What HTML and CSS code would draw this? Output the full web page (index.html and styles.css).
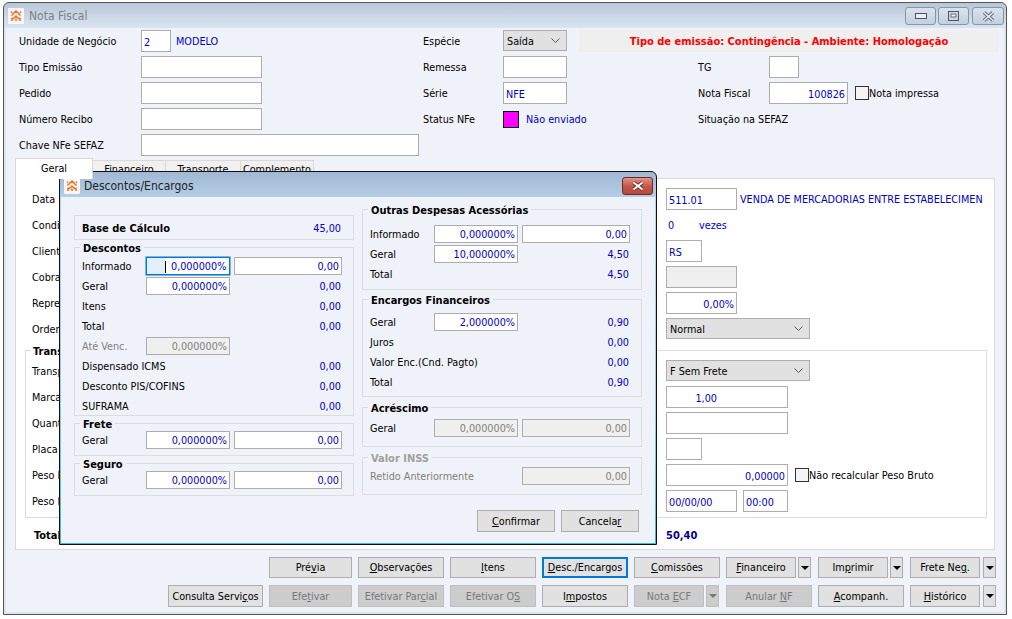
FILE: index.html
```html
<!DOCTYPE html>
<html lang="pt-BR">
<head>
<meta charset="utf-8">
<title>Nota Fiscal</title>
<link rel="stylesheet" href="styles.css">
</head>
<body>
<svg class="defs" width="0" height="0" aria-hidden="true">
  <symbol id="logo" viewBox="0 0 16 16">
    <rect width="16" height="16" rx="1" fill="#f7f7f7"/>
    <path d="M3.5 7.5 8 3l4.5 4.5M5 11l3-3 3 3M4 9.5V13M12 9.5V13M8 10.5V13M3.5 5V3.5M12.5 5V3.5" fill="none" stroke="#f26a1b" stroke-width="1.5"/>
  </symbol>
  <symbol id="chev" viewBox="0 0 9 5">
    <path d="M.5.5 4.5 4.5 8.5.5" fill="none" stroke="#555" stroke-width="1"/>
  </symbol>
</svg>

<main class="window">
  <header class="titlebar main-title">
    <svg class="logo"><use href="#logo"/></svg>
    <span class="title title-inactive">Nota Fiscal</span>
    <div class="caption">
      <div class="cap-btn"><svg width="12" height="6"><rect x=".5" y=".5" width="11" height="5" fill="#e9eef4" stroke="#4c5560"/></svg></div>
      <div class="cap-btn"><svg width="11" height="10"><rect x=".5" y=".5" width="10" height="9" fill="none" stroke="#4c5560"/><rect x="3" y="3" width="5" height="3" fill="#e9eef4" stroke="#4c5560" stroke-width=".8"/></svg></div>
      <div class="cap-btn cap-close"><svg width="13" height="11"><path d="M2 1.5 11 9.5M11 1.5 2 9.5" stroke="#5a6672" stroke-width="3.4"/><path d="M2 1.5 11 9.5M11 1.5 2 9.5" stroke="#eef2f6" stroke-width="1.6"/></svg></div>
    </div>
  </header>

  <div class="client">
    <section class="top-form">
      <div class="lbl">Unidade de Negócio</div>
      <div class="inline"><div class="field w30">2</div><span class="link">MODELO</span></div>
      <div class="lbl">Espécie</div>
      <div class="select w64">Saída<svg class="chev"><use href="#chev"/></svg></div>
      <div class="banner">Tipo de emissão: Contingência - Ambiente: Homologação</div>

      <div class="lbl">Tipo Emissão</div>
      <div class="field w121"></div>
      <div class="lbl">Remessa</div>
      <div class="field w64"></div>
      <div></div>
      <div class="lbl">TG</div>
      <div class="field w30"></div>

      <div class="lbl">Pedido</div>
      <div class="field w121"></div>
      <div class="lbl">Série</div>
      <div class="field w64">NFE</div>
      <div></div>
      <div class="lbl">Nota Fiscal</div>
      <div class="inline"><div class="field w79 right">100826</div><span class="check check-first"></span><span>Nota impressa</span></div>

      <div class="lbl">Número Recibo</div>
      <div class="field w121"></div>
      <div class="lbl">Status NFe</div>
      <div class="inline"><span class="swatch"></span><span class="link status">Não enviado</span></div>
      <div></div>
      <div class="lbl">Situação na SEFAZ</div>
      <div></div>

      <div class="lbl">Chave NFe SEFAZ</div>
      <div class="field w278"></div>
    </section>

    <nav class="tabs">
      <div class="tab tab-on">Geral</div>
      <div class="tab w73">Financeiro</div>
      <div class="tab w75">Transporte</div>
      <div class="tab w73">Complemento</div>
    </nav>

    <section class="panel">
      <div class="rows upper">
        <div class="lbl">Data Emissão</div>
        <div class="inline"><div class="field w71">511.01</div><span class="link cfop">VENDA DE MERCADORIAS ENTRE ESTABELECIMEN</span></div>
        <div class="lbl">Condição Pagto</div>
        <div class="inline"><span class="link times">0</span><span class="link">vezes</span></div>
        <div class="lbl">Cliente</div>
        <div class="field w36">RS</div>
        <div class="lbl">Cobrança</div>
        <div class="field w71 off"></div>
        <div class="lbl">Representante</div>
        <div class="field w71 right">0,00%</div>
        <div class="lbl">Ordem</div>
        <div class="select w144">Normal<svg class="chev"><use href="#chev"/></svg></div>
      </div>

      <div class="transport">
        <div class="legend legend-white">Transporte</div>
        <div class="rows">
          <div class="lbl">Transportadora</div>
          <div class="select w144">F Sem Frete<svg class="chev"><use href="#chev"/></svg></div>
          <div class="lbl">Marca</div>
          <div class="field w122 right qty">1,00</div>
          <div class="lbl">Quantidade</div>
          <div class="field w122"></div>
          <div class="lbl">Placa</div>
          <div class="field w36"></div>
          <div class="lbl">Peso Bruto</div>
          <div class="inline"><div class="field w122 right">0,00000</div><span class="check check-second"></span><span>Não recalcular Peso Bruto</span></div>
          <div class="lbl">Peso Líquido</div>
          <div class="inline dates"><div class="field w71">00/00/00</div><div class="field w45">00:00</div></div>
        </div>
      </div>

      <div class="total-row"><b>Total</b><b class="total-val">50,40</b></div>
    </section>

    <section class="actions">
      <div class="act-row act-a">
        <div class="btn w83"><span>Pré<u>v</u>ia</span></div>
        <div class="btn w86"><span><u>O</u>bservações</span></div>
        <div class="btn w86"><span><u>I</u>tens</span></div>
        <div class="btn w86 btn-focus"><span><u>D</u>esc./Encargos</span></div>
        <div class="btn w86"><span><u>C</u>omissões</span></div>
        <div class="split"><div class="btn w70"><span><u>F</u>inanceiro</span></div><div class="arrow"></div></div>
        <div class="split"><div class="btn w70"><span>Im<u>p</u>rimir</span></div><div class="arrow"></div></div>
        <div class="split split-wide"><div class="btn w70"><span>Frete Ne<u>g</u>.</span></div><div class="arrow"></div></div>
      </div>
      <div class="act-row act-b">
        <div class="btn w95"><span>Consulta Servi<u>ç</u>os</span></div>
        <div class="btn w83 dis"><span>Efe<u>t</u>ivar</span></div>
        <div class="btn w86 dis"><span>Efetivar Par<u>c</u>ial</span></div>
        <div class="btn w86 dis"><span>Efetivar O<u>S</u></span></div>
        <div class="btn w86"><span>I<u>m</u>postos</span></div>
        <div class="split"><div class="btn w70 dis"><span>Nota <u>E</u>CF</span></div><div class="arrow arrow-dis"></div></div>
        <div class="btn w86 dis"><span>Anular <u>N</u>F</span></div>
        <div class="btn w86"><span><u>A</u>companh.</span></div>
        <div class="split split-wide"><div class="btn w70"><span><u>H</u>istórico</span></div><div class="arrow"></div></div>
      </div>
    </section>
  </div>

  <div class="modal">
    <header class="titlebar modal-title">
      <svg class="logo"><use href="#logo"/></svg>
      <span class="title">Descontos/Encargos</span>
      <div class="close-btn"><svg width="14" height="10"><path d="M2.5 1.5 11.5 8.5M11.5 1.5 2.5 8.5" stroke="#6b2a22" stroke-width="3.6"/><path d="M2.5 1.5 11.5 8.5M11.5 1.5 2.5 8.5" stroke="#fff" stroke-width="2"/></svg></div>
    </header>
    <div class="modal-body">
      <div class="col col-left">
        <div class="group g-base">
          <div class="mrow"><b class="span2">Base de Cálculo</b><span class="val">45,00</span></div>
        </div>
        <div class="group g-desc">
          <div class="legend">Descontos</div>
          <div class="mrows">
            <div class="mrow"><span>Informado</span><div class="field mf focus"><span class="sel"></span><span class="caret"></span>0,000000%</div><div class="field mf right">0,00</div></div>
            <div class="mrow"><span>Geral</span><div class="field mf right">0,000000%</div><span class="val">0,00</span></div>
            <div class="mrow"><span class="span2">Itens</span><span class="val">0,00</span></div>
            <div class="mrow"><span class="span2">Total</span><span class="val">0,00</span></div>
            <div class="mrow"><span class="muted">Até Venc.</span><div class="field mf right off">0,000000%</div></div>
            <div class="mrow"><span class="span2">Dispensado ICMS</span><span class="val">0,00</span></div>
            <div class="mrow"><span class="span2">Desconto PIS/COFINS</span><span class="val">0,00</span></div>
            <div class="mrow"><span class="span2">SUFRAMA</span><span class="val">0,00</span></div>
          </div>
        </div>
        <div class="group g-small">
          <div class="legend">Frete</div>
          <div class="mrow"><span>Geral</span><div class="field mf right">0,000000%</div><div class="field mf right">0,00</div></div>
        </div>
        <div class="group g-small">
          <div class="legend">Seguro</div>
          <div class="mrow"><span>Geral</span><div class="field mf right">0,000000%</div><div class="field mf right">0,00</div></div>
        </div>
      </div>

      <div class="col col-right">
        <div class="group g-outras">
          <div class="legend">Outras Despesas Acessórias</div>
          <div class="mrows">
            <div class="mrow"><span>Informado</span><div class="field mf right">0,000000%</div><div class="field mf right">0,00</div></div>
            <div class="mrow"><span>Geral</span><div class="field mf right">10,000000%</div><span class="val">4,50</span></div>
            <div class="mrow"><span class="span2">Total</span><span class="val">4,50</span></div>
          </div>
        </div>
        <div class="group g-enc">
          <div class="legend">Encargos Financeiros</div>
          <div class="mrows">
            <div class="mrow"><span>Geral</span><div class="field mf right">2,000000%</div><span class="val">0,90</span></div>
            <div class="mrow"><span class="span2">Juros</span><span class="val">0,00</span></div>
            <div class="mrow"><span class="span2">Valor Enc.(Cnd. Pagto)</span><span class="val">0,00</span></div>
            <div class="mrow"><span class="span2">Total</span><span class="val">0,90</span></div>
          </div>
        </div>
        <div class="group g-acr">
          <div class="legend">Acréscimo</div>
          <div class="mrow"><span>Geral</span><div class="field mf right off">0,000000%</div><div class="field mf right off">0,00</div></div>
        </div>
        <div class="group g-inss">
          <div class="legend legend-off">Valor INSS</div>
          <div class="mrow"><span class="span2 muted">Retido Anteriormente</span><div class="field mf right off">0,00</div></div>
        </div>
      </div>

      <div class="modal-actions">
        <div class="btn w78"><span><u>C</u>onfirmar</span></div>
        <div class="btn w78"><span>Cancela<u>r</u></span></div>
      </div>
    </div>
  </div>
</main>
</body>
</html>
```

FILE: styles.css
```css
* { box-sizing: border-box; }
html, body { margin: 0; height: 100%; }
body {
  padding: 2px 0 0 3px;
  background: #fff;
  overflow: hidden;
  font-family: "DejaVu Sans Condensed", "DejaVu Sans", sans-serif;
  font-stretch: condensed;
  font-size: 10.75px;
  color: #000;
}
b { font-weight: bold; font-size: 11px; }
.defs { position: absolute; }

/* windows */
.window {
  position: relative;
  width: 1004px;
  height: 613px;
  padding: 0 2px 2px;
  border: 1px solid #555;
  border-radius: 6px 6px 0 0;
  background: linear-gradient(#b8c7d7, #dbe6f2 26px, #dbe6f2);
}
.titlebar { display: flex; align-items: center; height: 25px; padding-left: 2px; }
.main-title { padding-top: 1px; }
.logo { width: 16px; height: 16px; flex: none; }
.title { margin-left: 5px; font-size: 12px; color: #222; }
.title-inactive { color: #808080; }
.caption { display: flex; gap: 2px; margin-left: auto; }
.cap-btn {
  display: flex; align-items: center; justify-content: center;
  width: 31px; height: 18px;
  border: 1px solid #8496a8;
  border-radius: 3px;
  background: linear-gradient(#d9e3ec, #c3d0dd);
}
.cap-close { width: 32px; margin-left: 1px; }

.client { height: 584px; background: #f0f2f9; }

/* top form */
.top-form {
  display: grid;
  grid-template-columns: 122px 282px 80px 76px 119px 71px 230px;
  grid-auto-rows: 22px;
  row-gap: 4px;
  padding: 2px 0 0 13px;
}
.lbl { display: flex; align-items: center; white-space: nowrap; }
.inline { display: flex; align-items: center; white-space: nowrap; }
.link { color: #0000c0; }
.banner {
  grid-column: span 3;
  display: flex; align-items: center; justify-content: center;
  background: #efefef;
  color: #f00;
  font-weight: bold;
  font-size: 11px;
}
.inline .link { margin-left: 5px; }
.inline .status { margin-left: 7px; }
.inline .cfop { margin-left: 3px; }
.inline .times { margin-left: 2px; margin-right: 0; width: 31px; }
.inline .times + .link { margin-left: 0; }

/* controls */
.field {
  display: flex; align-items: center;
  height: 22px;
  padding: 2px 2px 0;
  flex: none;
  border: 1px solid #adadad;
  background: #fff;
  color: #0000c0;
  white-space: nowrap;
}
.right { justify-content: flex-end; }
.off { background: #efefef; color: #808080; }
.qty { padding-right: 70px; }
.w30 { width: 30px; } .w36 { width: 36px; } .w45 { width: 45px; } .w64 { width: 64px; }
.w70 { width: 70px; } .w71 { width: 71px; } .w73 { width: 73px; } .w75 { width: 75px; }
.w78 { width: 78px; } .w79 { width: 79px; } .w83 { width: 83px; } .w86 { width: 86px; }
.w95 { width: 95px; } .w121 { width: 121px; } .w122 { width: 122px; } .w144 { width: 144px; }
.w278 { width: 278px; }
.select {
  display: flex; align-items: center; justify-content: space-between;
  height: 21px;
  padding: 2px 6px 0 3px;
  border: 1px solid #adadad;
  background: #e1e1e1;
}
.chev { width: 9px; height: 5px; margin-top: -2px; }
.check { flex: none; width: 14px; height: 14px; border: 1px solid #333; background: #f4f4f6; }
.check-first { margin-left: 7px; }
.check-second { margin-left: 7px; }
.swatch { width: 16px; height: 17px; flex: none; border: 1px solid #000; background: #f0f; }
.dates { gap: 6px; }

/* tabs */
.tabs { display: flex; align-items: flex-end; height: 21px; margin: 2px 0 -1px 9px; }
.tab {
  display: flex; align-items: center; justify-content: center;
  height: 19px;
  border: 1px solid #d9d9d9;
  border-left: 0;
  background: #f0f0f0;
}
.tab-on {
  width: 78px; height: 21px; padding-bottom: 2px;
  border-left: 1px solid #d9d9d9;
  border-bottom: 0;
  background: #fff;
  position: relative;
  z-index: 1;
}

/* panel */
.panel {
  width: 980px;
  height: 372px;
  margin-left: 9px;
  padding: 9px 0 0 9px;
  border: 1px solid #d9d9d9;
  background: #fff;
}
.rows { display: grid; grid-template-columns: 634px 1fr; grid-auto-rows: 22px; row-gap: 4px; }
.upper { padding-left: 7px; }
.transport {
  width: 962px;
  height: 168px;
  margin-top: 10px;
  padding: 0 6px;
  border: 1px solid #dcdcdc;
}
.legend {
  width: fit-content;
  height: 14px;
  line-height: 16px;
  margin: -7px 0 0 -2px;
  padding: 0 3px;
  background: #f0f2f9;
  font-weight: bold;
  font-size: 11px;
  color: #000;
}
.legend-white { background: #fff; margin: -7px 0 2px -1px; padding: 0 3px 0 2px; }
.legend-off { color: #a0a0a0; }
.total-row {
  display: grid;
  grid-template-columns: 632px auto;
  height: 18px;
  margin-top: 8px;
  padding-left: 9px;
  align-items: center;
}
.total-val { color: #00008b; }

/* buttons */
.actions { display: flex; flex-direction: column; gap: 7px; margin-top: 7px; }
.act-row { display: flex; gap: 6px; }
.act-a { padding-left: 263px; height: 21px; }
.act-b { padding-left: 162px; height: 22px; }
.btn {
  display: flex; align-items: center; justify-content: center;
  height: 100%;
  flex: none;
  border: 1px solid #adadad;
  background: #e1e1e1;
  white-space: nowrap;
}
.btn-focus { border: 2px solid #0078d7; }
.dis { background: #ccc; border-color: #bfbfbf; color: #787878; }
.split { display: flex; gap: 2px; width: 86px; }
.split-wide { gap: 3px; }
.arrow {
  flex: none;
  display: flex; align-items: center; justify-content: center;
  width: 13px; height: 100%;
  border: 1px solid #adadad;
  background: #e1e1e1;
}
.arrow::after {
  content: "";
  border-style: solid;
  border-width: 4px 4px 0;
  border-color: #000 transparent transparent;
}
.arrow-dis { background: #ccc; border-color: #bfbfbf; }
.arrow-dis::after { border-top-color: #787878; }

/* modal */
.modal {
  position: absolute;
  left: 55px;
  top: 168px;
  width: 598px;
  height: 374px;
  padding: 0 1px 1px;
  border: 1px solid #111;
  border-radius: 6px 6px 0 0;
  background: linear-gradient(#a0b8d3, #b9d2ea 30px, #8fcbe6 65%, #3fb6dc);
}
.modal-title { height: 25px; padding: 2px 0 0 2px; }
.modal-title .logo { margin-left: 1px; }
.modal-title .title { margin-left: 4px; }
.close-btn {
  display: flex; align-items: center; justify-content: center;
  width: 31px; height: 18px;
  margin-left: auto;
  margin-right: 2px;
  border: 1px solid #6b2a22;
  border-radius: 3px;
  background: linear-gradient(#dc958b, #c4594a 50%, #b5493a);
}
.modal-body {
  display: grid;
  grid-template-columns: 280px 280px;
  column-gap: 8px;
  row-gap: 14px;
  grid-template-rows: 287px 22px;
  height: 347px;
  padding: 12px 0 0 13px;
  background: #f0f2f9;
  border-bottom: 1px solid #3fb6dc;
}
.col { display: flex; flex-direction: column; }
.col-left { gap: 7px; padding-top: 6px; }
.col-right { gap: 9px; }
.group { padding: 0 11px 0 7px; border: 1px solid #dcdcdc; }
.g-base { height: 25px; padding-top: 3px; }
.g-desc { height: 169px; }
.g-desc .mrows { margin-top: 2px; }
.g-small { height: 33px; }
.g-outras { height: 81px; }
.g-outras .mrows { margin-top: 8px; }
.g-enc { height: 98px; }
.g-enc .mrows { margin-top: 6px; }
.g-acr { height: 40px; margin-top: 1px; }
.g-acr .mrow { margin-top: 4px; }
.g-inss { height: 38px; margin-top: 1px; }
.g-inss .mrow { margin-top: 2px; }
.mrows { display: flex; flex-direction: column; gap: 2px; }
.mrow {
  display: grid;
  grid-template-columns: 60px 84px 108px;
  column-gap: 4px;
  height: 18px;
  align-items: center;
  white-space: nowrap;
}
.span2 { grid-column: span 2; }
.val { color: #0000c0; text-align: right; padding-right: 1px; }
.muted { color: #808080; }
.mf { height: 18px; padding-top: 1px; }
.focus { padding: 1px 2px 0 0; border-color: #0078d7; border-width: 1px; box-shadow: 0 0 0 .5px #0078d7; }
.sel { align-self: stretch; width: 18px; margin-top: -1px; background: #e3effb; }
.caret { width: 1px; height: 12px; margin-right: 5px; background: #000; }
.modal-actions {
  grid-column: 1 / -1;
  display: flex;
  justify-content: flex-end;
  gap: 6px;
  padding-right: 3px;
}
```
